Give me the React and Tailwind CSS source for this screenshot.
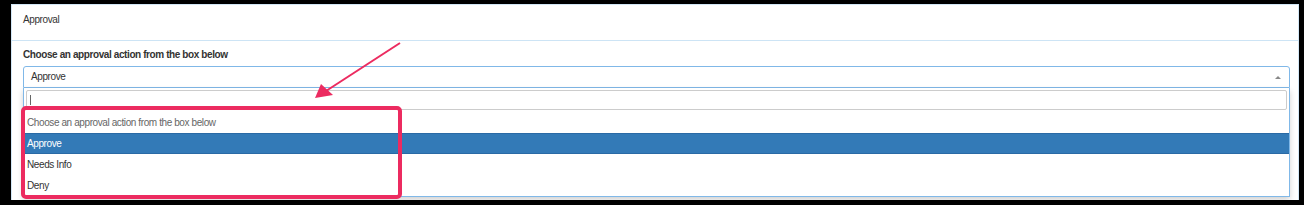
export default function App() {
  const font = { fontFamily: '"Liberation Sans", Arial, sans-serif' };
  return (
    <div
      className="relative w-[1304px] h-[205px] bg-black pt-[4px] pl-[11px] pr-[5px] overflow-hidden text-[10px] tracking-[-0.4px] text-[#333]"
      style={font}
    >
      <div className="h-[196px] overflow-hidden">
        <div className="bg-white border border-[#d3e7f6] h-[220px] flex flex-col">
          <div className="h-[36px] border-b border-[#cde4f5] pl-[11px] pt-[9px] leading-[12px]">
            Approval
          </div>
          <div className="pl-[11px] pr-[8px] pt-[8px] flex flex-col">
            <div className="font-bold leading-[12px] mb-[5px]">
              Choose an approval action from the box below
            </div>
            <div className="h-[22px] border border-[#80b8e8] rounded-t-[3px] flex items-center justify-between pl-[7px] pr-[8px] leading-[12px]">
              <span>Approve</span>
              <span className="w-0 h-0 border-l-[3px] border-r-[3px] border-b-[3px] border-l-transparent border-r-transparent border-b-[#888]" />
            </div>
            <div className="border border-t-0 border-[#80b8e8] shadow-[0_3px_6px_rgba(0,0,0,0.18)] flex flex-col">
              <div className="px-[2px] pt-[2px] pb-[2px]">
                <div className="h-[20px] border border-[#cccccc] rounded-[2px] flex items-center pl-[3px]">
                  <div className="w-[1px] h-[10px] bg-[#666]" />
                </div>
              </div>
              <div className="h-[21px] flex items-center pl-[3px] text-[#666]">
                Choose an approval action from the box below
              </div>
              <div className="h-[21px] flex items-center pl-[3px] bg-[#337ab7] border-y border-[#2a6aa5] text-white">
                Approve
              </div>
              <div className="h-[21px] flex items-center pl-[3px]">Needs Info</div>
              <div className="h-[21px] flex items-center pl-[3px]">Deny</div>
            </div>
          </div>
        </div>
      </div>
      <svg
        className="absolute left-0 top-0 pointer-events-none"
        width="1304"
        height="205"
        viewBox="0 0 1304 205"
      >
        <rect x="23" y="108" width="377" height="89" rx="3" fill="none" stroke="#ec2b60" strokeWidth="4" />
        <line x1="400" y1="43" x2="326" y2="91" stroke="#ec2b60" strokeWidth="2" />
        <polygon points="315,98 321,84 333,95" fill="#ec2b60" />
      </svg>
    </div>
  );
}
